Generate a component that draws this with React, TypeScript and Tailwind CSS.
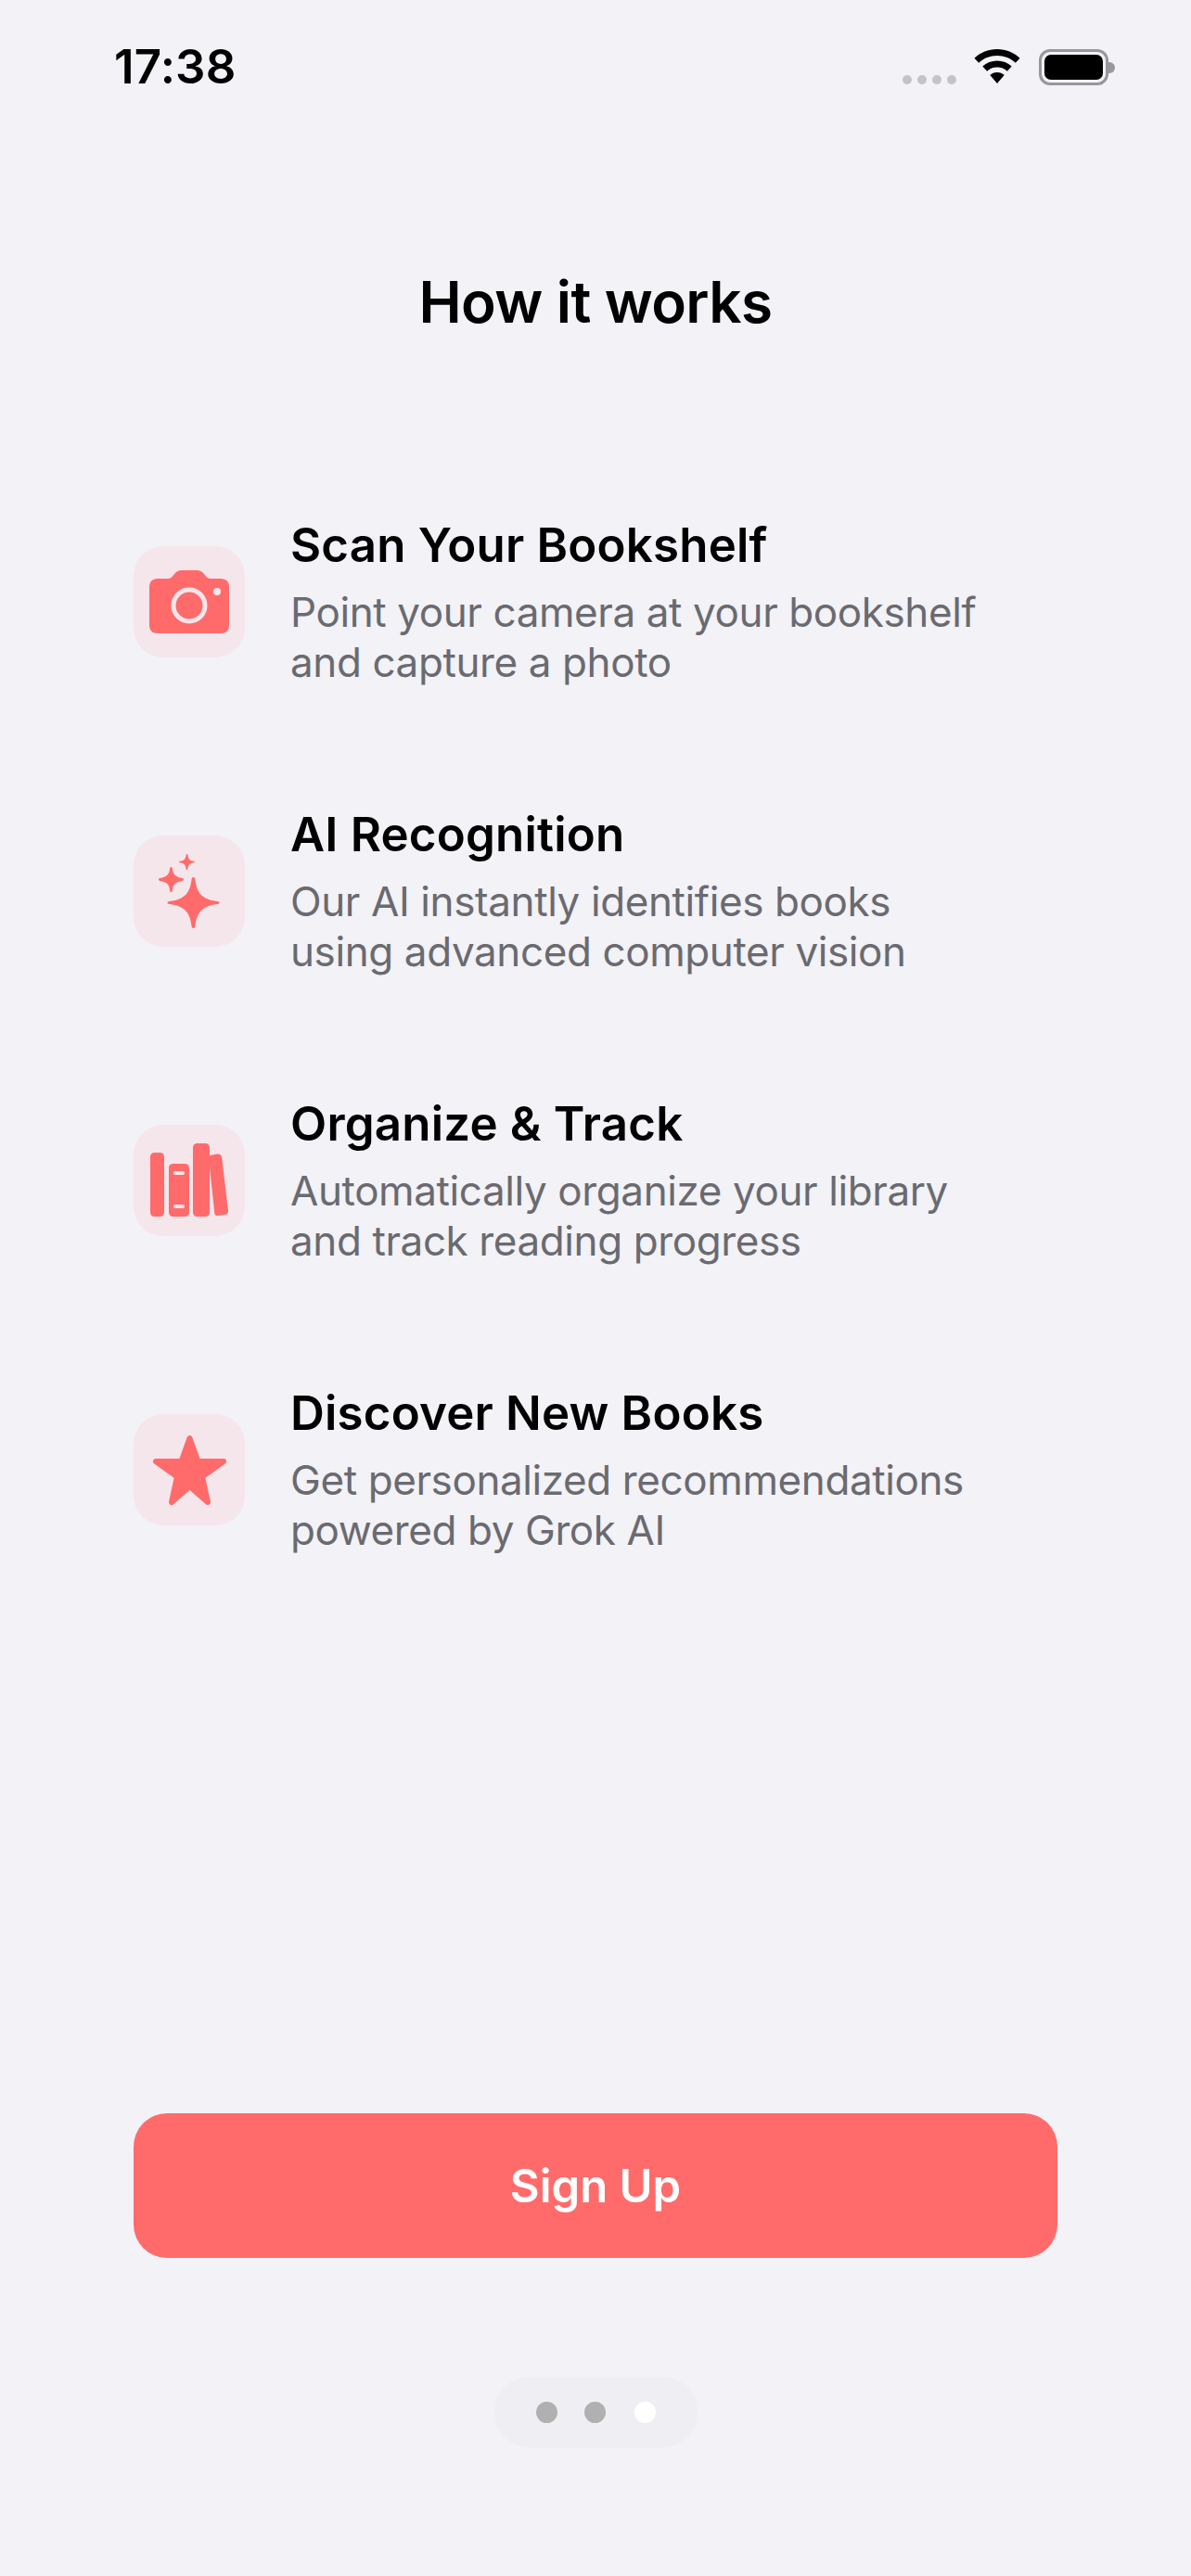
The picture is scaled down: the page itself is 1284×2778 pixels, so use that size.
const STEPS = [
  { title: "Scan Your Bookshelf", lines: ["Point your camera at your bookshelf", "and capture a photo"], icon: "camera" },
  { title: "AI Recognition", lines: ["Our AI instantly identifies books", "using advanced computer vision"], icon: "sparkles" },
  { title: "Organize & Track", lines: ["Automatically organize your library", "and track reading progress"], icon: "books" },
  { title: "Discover New Books", lines: ["Get personalized recommendations", "powered by Grok AI"], icon: "star" },
];

function StepIcon({ name }: { name: string }) {
  if (name === "camera") {
    return (
      <svg viewBox="0 0 120 120" className="w-[120px] h-[120px]">
        <path
          d="M26 35h11c2 0 3.500-.8 5-2.500l2-2.500c2.500-3 4.500-4 8-4h16c3.500 0 5.500 1 8 4l2 2.500c1.500 1.700 3 2.500 5 2.500h11c6 0 9 3.500 9 9v41c0 6-3 9-9 9h-68c-6 0-9-3-9-9v-41c0-5.500 3-9 9-9z"
          fill="#ff6b6b"
        />
        <circle cx="60" cy="64" r="17" fill="none" stroke="#f5e6eb" strokeWidth="5" />
        <circle cx="90" cy="49" r="4" fill="#f5e6eb" />
      </svg>
    );
  }
  if (name === "sparkles") {
    return (
      <svg viewBox="0 0 120 120" className="w-[120px] h-[120px]" fill="#ff6b6b">
        <path d="M64.500 45c1.400 0 1.800 1 2 2.500 1.500 13 6 21.500 24 23.500 1.300.1 2 .7 2 1.500s-.7 1.400-2 1.500c-18 2-22.500 10.500-24 23.500-.2 1.500-.6 2.500-2 2.500s-1.800-1-2-2.500c-1.500-13-6-21.500-24-23.500-1.300-.1-2-.7-2-1.500s.7-1.400 2-1.500c18-2 22.500-10.500 24-23.500.2-1.500.6-2.500 2-2.500z" />
        <path d="M40.500 34c.9 0 1.200.7 1.300 1.600.8 6.400 3.200 9.400 10.700 10.400 1 .1 1.500.6 1.500 1.500s-.5 1.400-1.500 1.500c-7.500 1-9.900 4-10.700 10.400-.1.900-.4 1.600-1.300 1.600s-1.200-.7-1.300-1.600c-.8-6.400-3.200-9.400-10.700-10.400-1-.1-1.500-.6-1.500-1.500s.5-1.400 1.500-1.500c7.500-1 9.900-4 10.700-10.400.1-.9.400-1.600 1.300-1.600z" />
        <path d="M57.500 20c.6 0 .8.500.9 1 .5 4.400 2 6.300 6.600 6.800.7.100 1 .4 1 .7s-.3.600-1 .7c-4.600.5-6.100 2.400-6.600 6.800-.1.500-.3 1-.9 1s-.8-.5-.9-1c-.5-4.400-2-6.300-6.600-6.800-.7-.1-1-.4-1-.7s.3-.6 1-.7c4.600-.5 6.100-2.400 6.600-6.800.1-.5.300-1 .9-1z" />
      </svg>
    );
  }
  if (name === "books") {
    return (
      <svg viewBox="0 0 120 120" className="w-[120px] h-[120px]" fill="#ff6b6b">
        <rect x="18" y="30" width="15" height="69" rx="4.500" />
        <rect x="38" y="42" width="22" height="57" rx="4.500" />
        <rect x="43" y="50" width="12" height="4" rx="2" fill="#f5e6eb" />
        <rect x="43" y="86" width="12" height="4" rx="2" fill="#f5e6eb" />
        <rect x="64" y="20" width="18" height="79" rx="4.500" />
        <path d="M82 33l8-1.500c3-.4 4.800.8 5.200 4l6.800 57c.3 2.500-.8 4-3 4.300l-7.500 1.200c-2.800.3-4-.8-4.300-3.300L82 45z" />
      </svg>
    );
  }
  return (
    <svg viewBox="0 0 120 120" className="w-[120px] h-[120px]">
      <polygon
        points="60.500,26 69.500,51 97,51 74,67.500 80,95 60.500,78 41,95 47,67.500 24,51 51.500,51"
        fill="#ff6b6b"
        stroke="#ff6b6b"
        strokeWidth="6"
        strokeLinejoin="round"
      />
    </svg>
  );
}

export default function App() {
  return (
    <div className="w-full h-[2778px] bg-[#f2f2f7] flex flex-col font-['Inter','Liberation_Sans',sans-serif] text-black">
      {/* status bar */}
      <div className="h-[146px] pl-[123px] pr-[82px] flex items-start justify-between">
        <span className="mt-[43px] text-[51px] leading-[58px] font-semibold tracking-[0.2px]">17:38</span>
        <div className="mt-[53px] flex items-end">
          <div className="flex gap-[6px] mb-[1px]">
            <span className="w-[10px] h-[10px] rounded-full bg-[#c4c4c8]" />
            <span className="w-[10px] h-[10px] rounded-full bg-[#c4c4c8]" />
            <span className="w-[10px] h-[10px] rounded-full bg-[#c4c4c8]" />
            <span className="w-[10px] h-[10px] rounded-full bg-[#c4c4c8]" />
          </div>
          <svg viewBox="0 0 50 38" className="w-[50px] h-[38px] ml-[19px] mb-[1px]" fill="#000">
            <path d="M25 0c9.500 0 18 3.600 24.500 9.700l-4.700 5C39.500 9.800 32.600 7 25 7S10.500 9.800 5.200 14.700L.5 9.700C7 3.600 15.500 0 25 0z" />
            <path d="M25 12.500c6 0 11.500 2.300 15.700 6l-4.800 5.200C33 21 29.200 19.500 25 19.500S17 21 14.100 23.700l-4.800-5.200c4.200-3.700 9.700-6 15.700-6z" />
            <path d="M25 25c3 0 5.700 1.100 7.700 3L25 37 17.300 28c2-1.900 4.700-3 7.700-3z" />
          </svg>
          <div className="ml-[20px] flex items-center">
            <div className="w-[75px] h-[39px] rounded-[12px] border-[3px] border-[#98989c] p-[3px]">
              <div className="w-full h-full rounded-[7px] bg-black" />
            </div>
            <div className="w-[7px] h-[12px] rounded-r-full bg-[#98989c]" />
          </div>
        </div>
      </div>

      <h1 className="mt-[141px] text-center text-[62px] leading-[78px] font-semibold tracking-[-0.6px]">How it works</h1>

      <div className="mt-[191px] px-[144px] flex flex-col gap-[126px]">
        {STEPS.map((step) => (
          <div key={step.title} className="flex items-center h-[186px]">
            <div className="w-[120px] h-[120px] rounded-[32px] bg-[#f5e6eb] shrink-0">
              <StepIcon name={step.icon} />
            </div>
            <div className="ml-[49px]">
              <div className="text-[51px] leading-[62px] font-semibold tracking-[0.2px]">{step.title}</div>
              <div className="mt-[14px] text-[44px] leading-[54px] tracking-[-0.4px] text-[#6a6a70]">
                {step.lines.map((line) => (
                  <div key={line}>{line}</div>
                ))}
              </div>
            </div>
          </div>
        ))}
      </div>

      <div className="mt-auto px-[144px]">
        <button className="w-full h-[156px] pt-[2px] rounded-[36px] bg-[#ff6b6b] text-white text-[49px] font-semibold">Sign Up</button>
      </div>

      <div className="mt-[128px] mb-[138px] mx-auto w-[219px] h-[77px] rounded-full bg-[#efeff3] flex items-center justify-center">
        <span className="w-[23px] h-[23px] rounded-full bg-[#b0b0b0]" />
        <span className="ml-[29px] w-[23px] h-[23px] rounded-full bg-[#b0b0b0]" />
        <span className="ml-[31px] w-[23px] h-[23px] rounded-full bg-white" />
      </div>
    </div>
  );
}
